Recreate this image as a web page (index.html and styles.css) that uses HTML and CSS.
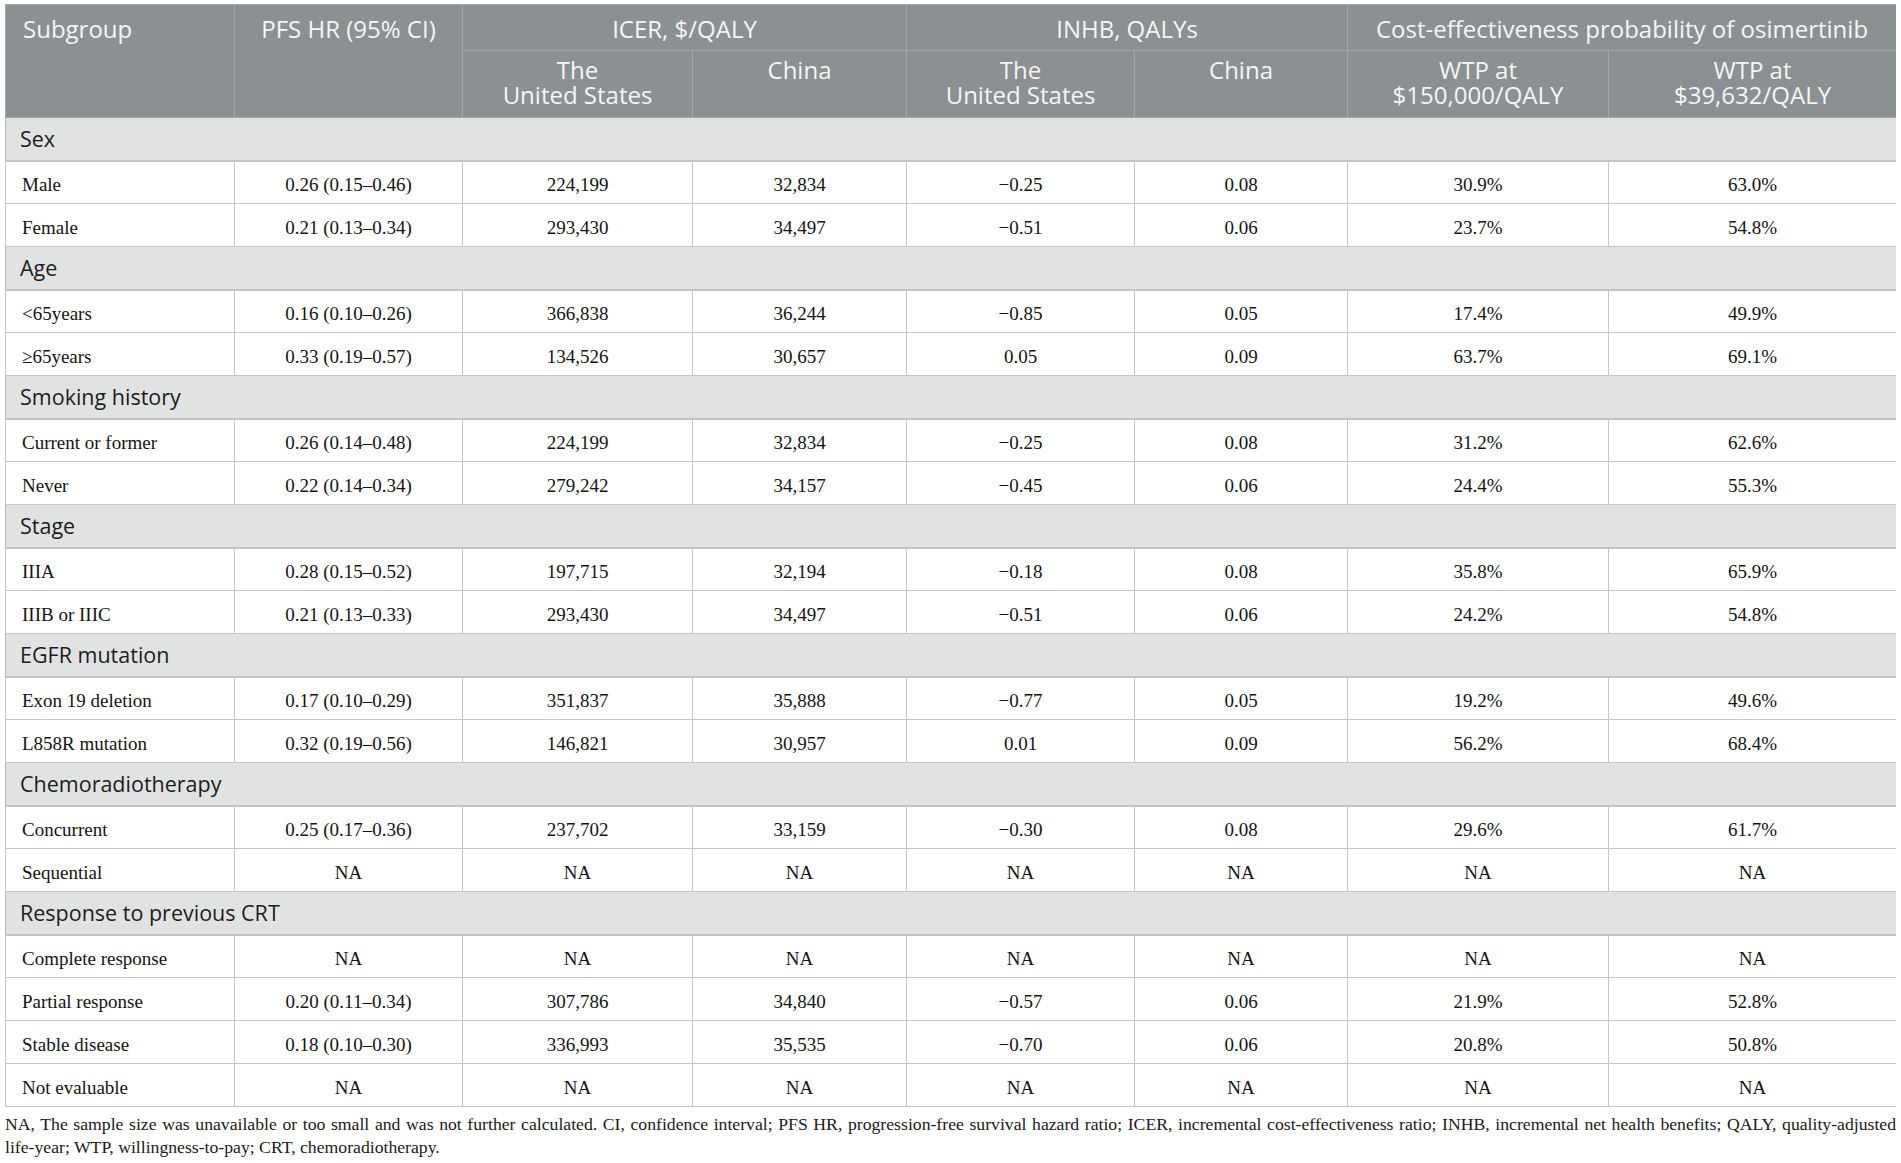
FILE: index.html
```html
<!DOCTYPE html>
<html lang="en">
<head>
<meta charset="utf-8">
<title>Subgroup analysis</title>
<link rel="stylesheet" href="styles.css">
</head>
<body>
<table class="tbl">
  <colgroup>
    <col class="c1"><col class="c2"><col class="c3"><col class="c4"><col class="c5"><col class="c6"><col class="c7"><col class="c8">
  </colgroup>
  <thead>
    <tr class="h1">
      <th rowspan="2" class="left">Subgroup</th>
      <th rowspan="2">PFS HR (95% CI)</th>
      <th colspan="2">ICER, $/QALY</th>
      <th colspan="2">INHB, QALYs</th>
      <th colspan="2">Cost-effectiveness probability of osimertinib</th>
    </tr>
    <tr class="h2">
      <th>The<br>United States</th>
      <th>China</th>
      <th>The<br>United States</th>
      <th>China</th>
      <th>WTP at<br>$150,000/QALY</th>
      <th>WTP at<br>$39,632/QALY</th>
    </tr>
  </thead>
  <tbody>
    <tr class="sec"><td colspan="8">Sex</td></tr>
    <tr><td>Male</td><td>0.26 (0.15–0.46)</td><td>224,199</td><td>32,834</td><td>−0.25</td><td>0.08</td><td>30.9%</td><td>63.0%</td></tr>
    <tr><td>Female</td><td>0.21 (0.13–0.34)</td><td>293,430</td><td>34,497</td><td>−0.51</td><td>0.06</td><td>23.7%</td><td>54.8%</td></tr>
    <tr class="sec"><td colspan="8">Age</td></tr>
    <tr><td>&lt;65years</td><td>0.16 (0.10–0.26)</td><td>366,838</td><td>36,244</td><td>−0.85</td><td>0.05</td><td>17.4%</td><td>49.9%</td></tr>
    <tr><td>≥65years</td><td>0.33 (0.19–0.57)</td><td>134,526</td><td>30,657</td><td>0.05</td><td>0.09</td><td>63.7%</td><td>69.1%</td></tr>
    <tr class="sec"><td colspan="8">Smoking history</td></tr>
    <tr><td>Current or former</td><td>0.26 (0.14–0.48)</td><td>224,199</td><td>32,834</td><td>−0.25</td><td>0.08</td><td>31.2%</td><td>62.6%</td></tr>
    <tr><td>Never</td><td>0.22 (0.14–0.34)</td><td>279,242</td><td>34,157</td><td>−0.45</td><td>0.06</td><td>24.4%</td><td>55.3%</td></tr>
    <tr class="sec"><td colspan="8">Stage</td></tr>
    <tr><td>IIIA</td><td>0.28 (0.15–0.52)</td><td>197,715</td><td>32,194</td><td>−0.18</td><td>0.08</td><td>35.8%</td><td>65.9%</td></tr>
    <tr><td>IIIB or IIIC</td><td>0.21 (0.13–0.33)</td><td>293,430</td><td>34,497</td><td>−0.51</td><td>0.06</td><td>24.2%</td><td>54.8%</td></tr>
    <tr class="sec"><td colspan="8">EGFR mutation</td></tr>
    <tr><td>Exon 19 deletion</td><td>0.17 (0.10–0.29)</td><td>351,837</td><td>35,888</td><td>−0.77</td><td>0.05</td><td>19.2%</td><td>49.6%</td></tr>
    <tr><td>L858R mutation</td><td>0.32 (0.19–0.56)</td><td>146,821</td><td>30,957</td><td>0.01</td><td>0.09</td><td>56.2%</td><td>68.4%</td></tr>
    <tr class="sec"><td colspan="8">Chemoradiotherapy</td></tr>
    <tr><td>Concurrent</td><td>0.25 (0.17–0.36)</td><td>237,702</td><td>33,159</td><td>−0.30</td><td>0.08</td><td>29.6%</td><td>61.7%</td></tr>
    <tr><td>Sequential</td><td>NA</td><td>NA</td><td>NA</td><td>NA</td><td>NA</td><td>NA</td><td>NA</td></tr>
    <tr class="sec"><td colspan="8">Response to previous CRT</td></tr>
    <tr><td>Complete response</td><td>NA</td><td>NA</td><td>NA</td><td>NA</td><td>NA</td><td>NA</td><td>NA</td></tr>
    <tr><td>Partial response</td><td>0.20 (0.11–0.34)</td><td>307,786</td><td>34,840</td><td>−0.57</td><td>0.06</td><td>21.9%</td><td>52.8%</td></tr>
    <tr><td>Stable disease</td><td>0.18 (0.10–0.30)</td><td>336,993</td><td>35,535</td><td>−0.70</td><td>0.06</td><td>20.8%</td><td>50.8%</td></tr>
    <tr><td>Not evaluable</td><td>NA</td><td>NA</td><td>NA</td><td>NA</td><td>NA</td><td>NA</td><td>NA</td></tr>
  </tbody>
</table>
<p class="note">NA, The sample size was unavailable or too small and was not further calculated. CI, confidence interval; PFS HR, progression-free survival hazard ratio; ICER, incremental cost-effectiveness ratio; INHB, incremental net health benefits; QALY, <span class="nobr">quality-adjusted</span> <span class="nobr">life-year;</span> WTP, willingness-to-pay; CRT, chemoradiotherapy.</p>
</body>
</html>
```

FILE: styles.css
```css
html, body {
  background: #ffffff;
}
body {
  margin: 4px 5px 0 5px;
  font-family: "Liberation Serif", "DejaVu Serif", serif;
  color: #1a1a1a;
}
.tbl {
  width: 1891px;
  border-collapse: collapse;
  table-layout: fixed;
  border: 1px solid #b7b9b9;
}
.c1 { width: 229px; }
.c2 { width: 228px; }
.c3 { width: 230px; }
.c4 { width: 214px; }
.c5 { width: 228px; }
.c6 { width: 213px; }
.c7 { width: 261px; }
.c8 { width: 288px; }

.tbl th {
  background: #8b9093;
  color: #f5f5f5;
  font-family: "Open Sans", "Noto Sans", sans-serif;
  font-weight: 400;
  font-size: 24px;
  line-height: 25px;
  text-align: center;
  vertical-align: top;
  border: 1px solid #a4a8aa;
  padding: 0 2px;
  box-sizing: border-box;
}
.tbl th.left {
  text-align: left;
  padding-left: 17px;
}
.tbl tr.h1 th {
  height: 46px;
  padding-top: 11px;
}
.tbl tr.h2 th {
  height: 67px;
  padding-top: 6px;
}
.tbl td {
  height: 43px;
  box-sizing: border-box;
  border: 1px solid #c6c6c6;
  font-size: 19px;
  text-align: center;
  vertical-align: middle;
  padding: 6px 4px 0 4px;
  color: #141414;
}
.tbl td:first-child {
  text-align: left;
  padding-left: 16px;
}
.tbl tr.sec td {
  background: #e1e3e2;
  font-family: "Open Sans", "Noto Sans", sans-serif;
  font-size: 21.5px;
  color: #1c1c1c;
  padding: 0 4px 0 14px;
  border-left: 1px solid #b7b9b9;
  border-right: 1px solid #b7b9b9;
  border-top: 1px solid #c6c6c6;
  border-bottom: 2px solid #c3c5c5;
}
.note {
  margin: 6px 0 0 0;
  font-size: 17.7px;
  line-height: 23px;
  text-align: justify;
  color: #1a1a1a;
}
.nobr {
  white-space: nowrap;
}
```
